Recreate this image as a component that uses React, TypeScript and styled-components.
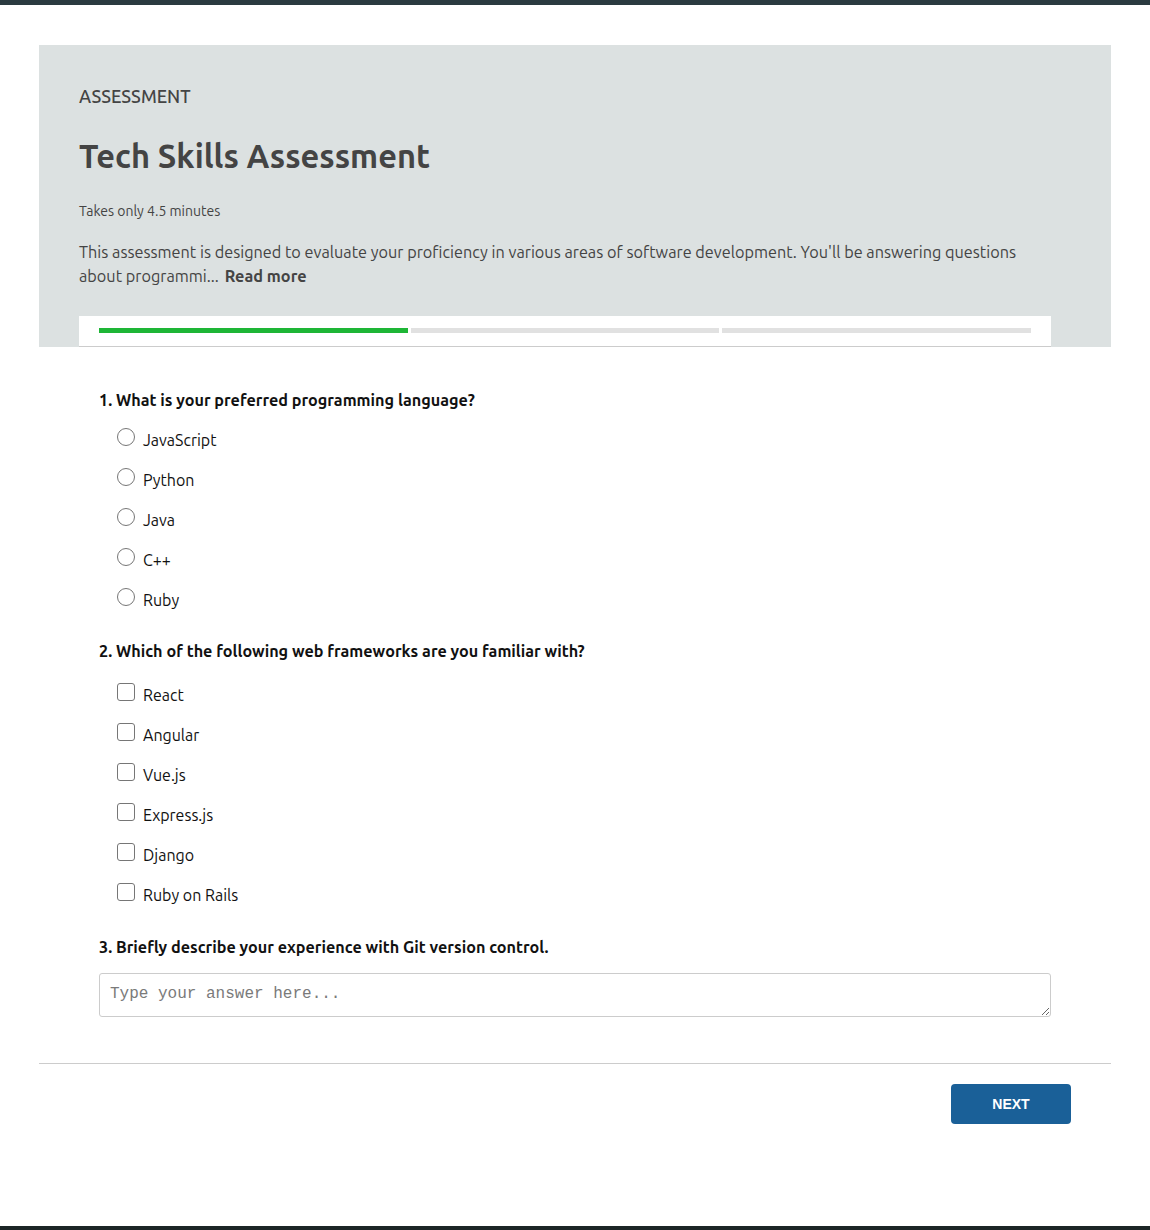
import React, { useState } from 'react';
import styled, { createGlobalStyle } from 'styled-components';

const GlobalStyle = createGlobalStyle`
  html, body {
    margin: 0;
    padding: 0;
    background: #ffffff;
  }
  body {
    font-family: Ubuntu, "Noto Sans", "Open Sans", sans-serif;
    color: #333333;
  }
  * {
    box-sizing: border-box;
  }
`;

const Page = styled.div`
  min-height: 1230px;
  display: flex;
  flex-direction: column;
  border-top: 5px solid #2b3b40;
  border-bottom: 4px solid #1c2526;
`;

const Main = styled.main`
  flex: 1;
  padding: 40px 39px 0;
`;

const Header = styled.section`
  background: #dce1e1;
  padding: 40px 60px 0 40px;
  color: #444444;
`;

const Eyebrow = styled.div`
  font-size: 18px;
  line-height: 22px;
  font-weight: 500;
  text-transform: uppercase;
`;

const Title = styled.h1`
  margin: 29px 0 0;
  font-size: 32.6px;
  line-height: 40px;
  font-weight: 700;
`;

const Duration = styled.div`
  margin-top: 26px;
  font-size: 14px;
  line-height: 18px;
`;

const Description = styled.p`
  margin: 20px 0 0;
  font-size: 16.25px;
  line-height: 24px;
`;

const ReadMore = styled.button`
  margin-left: 6px;
  padding: 0;
  border: none;
  background: none;
  font: inherit;
  font-weight: 700;
  color: #444444;
  cursor: pointer;
`;

const ProgressCard = styled.div`
  margin-top: 28px;
  background: #ffffff;
  border-bottom: 1px solid #cccccc;
  padding: 12px 20px 13px;
  display: flex;
  gap: 3px;
`;

const Segment = styled.div<{ done: boolean }>`
  flex: 1;
  height: 5px;
  background: ${({ done }) => (done ? '#1eb636' : '#e1e1e1')};
`;

const Questions = styled.section`
  padding: 41px 60px 26px 60px;
`;

const Question = styled.fieldset<{ gap: number }>`
  margin: 0 0 ${({ gap }) => gap}px;
  padding: 0;
  border: none;
`;

const QuestionTitle = styled.legend`
  padding: 0;
  font-size: 16.2px;
  line-height: 24px;
  font-weight: 700;
  color: #111111;
`;

const Options = styled.div<{ offset: number }>`
  display: flex;
  flex-direction: column;
  padding: ${({ offset }) => offset}px 0 0 18px;
`;

const Option = styled.label`
  display: flex;
  align-items: center;
  gap: 8px;
  height: 40px;
  font-size: 16px;
  color: #111111;
  cursor: pointer;
`;

const Radio = styled.input.attrs({ type: 'radio' })`
  appearance: none;
  margin: -6px 0 0;
  width: 18px;
  height: 18px;
  border: 1px solid #767676;
  border-radius: 50%;
  background: #ffffff;
  &:checked {
    border: 5px solid #1a6098;
  }
`;

const Checkbox = styled.input.attrs({ type: 'checkbox' })`
  appearance: none;
  margin: -6px 0 0;
  width: 18px;
  height: 18px;
  border: 1px solid #767676;
  border-radius: 3px;
  background: #ffffff;
  &:checked {
    background: #1a6098;
    border-color: #1a6098;
  }
`;

const Answer = styled.textarea`
  display: block;
  width: 100%;
  height: 44px;
  margin-top: 14px;
  padding: 10px 10px;
  border: 1px solid #cccccc;
  border-radius: 3px;
  font-family: "Liberation Mono", monospace;
  font-size: 16px;
  line-height: 20px;
  color: #333333;
  resize: vertical;
  &::placeholder {
    color: #7a7a7a;
  }
`;

const Footer = styled.footer`
  border-top: 1px solid #cccccc;
  padding: 20px 40px;
  display: flex;
  justify-content: flex-end;
`;

const NextButton = styled.button`
  width: 120px;
  height: 40px;
  border: none;
  border-radius: 4px;
  background: #1a6098;
  color: #ffffff;
  font-family: "Liberation Sans", Arial, sans-serif;
  font-size: 14px;
  font-weight: 700;
  text-transform: uppercase;
  cursor: pointer;
`;

const languages = ['JavaScript', 'Python', 'Java', 'C++', 'Ruby'];
const frameworks = ['React', 'Angular', 'Vue.js', 'Express.js', 'Django', 'Ruby on Rails'];

export default function App() {
  const [language, setLanguage] = useState('');
  const [picked, setPicked] = useState<string[]>([]);
  const [answer, setAnswer] = useState('');

  const toggle = (name: string) =>
    setPicked(prev => (prev.includes(name) ? prev.filter(p => p !== name) : [...prev, name]));

  return (
    <>
      <GlobalStyle />
      <Page>
        <Main>
          <Header>
            <Eyebrow>Assessment</Eyebrow>
            <Title>Tech Skills Assessment</Title>
            <Duration>Takes only 4.5 minutes</Duration>
            <Description>
              This assessment is designed to evaluate your proficiency in various areas of software
              development. You'll be answering questions about programmi...
              <ReadMore type="button">Read more</ReadMore>
            </Description>
            <ProgressCard>
              <Segment done />
              <Segment done={false} />
              <Segment done={false} />
            </ProgressCard>
          </Header>

          <Questions>
            <Question gap={19}>
              <QuestionTitle>1. What is your preferred programming language?</QuestionTitle>
              <Options offset={8}>
                {languages.map(l => (
                  <Option key={l}>
                    <Radio
                      name="language"
                      checked={language === l}
                      onChange={() => setLanguage(l)}
                    />
                    {l}
                  </Option>
                ))}
              </Options>
            </Question>

            <Question gap={20}>
              <QuestionTitle>2. Which of the following web frameworks are you familiar with?</QuestionTitle>
              <Options offset={12}>
                {frameworks.map(f => (
                  <Option key={f}>
                    <Checkbox checked={picked.includes(f)} onChange={() => toggle(f)} />
                    {f}
                  </Option>
                ))}
              </Options>
            </Question>

            <Question gap={20}>
              <QuestionTitle>3. Briefly describe your experience with Git version control.</QuestionTitle>
              <Answer
                placeholder="Type your answer here..."
                value={answer}
                onChange={e => setAnswer(e.target.value)}
              />
            </Question>
          </Questions>

          <Footer>
            <NextButton type="button">Next</NextButton>
          </Footer>
        </Main>
      </Page>
    </>
  );
}
